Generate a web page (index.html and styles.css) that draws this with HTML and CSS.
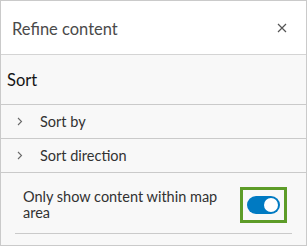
FILE: index.html
```
<!DOCTYPE html>
<html>
<head>
<meta charset="utf-8">
<link rel="stylesheet" href="styles.css">
</head>
<body>
<div class="panel">
  <div class="header">
    <span class="title">Refine content</span>
    <span class="close"><svg width="10" height="10" viewBox="0 0 10 10"><path d="M1 1L9 9M9 1L1 9" stroke="#555" stroke-width="1.2" fill="none"/></svg></span>
  </div>
  <div class="heading">Sort</div>
  <div class="row"><span class="chev"><svg width="6" height="9" viewBox="0 0 6 9"><path d="M1 1l3.5 3.5L1 8" stroke="#6a6a6a" stroke-width="1.1" fill="none"/></svg></span><span class="label">Sort by</span></div>
  <div class="row"><span class="chev"><svg width="6" height="9" viewBox="0 0 6 9"><path d="M1 1l3.5 3.5L1 8" stroke="#6a6a6a" stroke-width="1.1" fill="none"/></svg></span><span class="label">Sort direction</span></div>
  <div class="option">
    <div class="option-inner">
      <span class="opt-text">Only show content within map area</span>
      <span class="highlight"><span class="switch"><span class="knob"></span></span></span>
    </div>
  </div>
</div>
</body>
</html>
```
FILE: styles.css
```
html, body { margin: 0; padding: 0; background: #fff; }
body { font-family: "Avenir Next", Lato, "Open Sans", sans-serif; }
.panel {
  width: 307px; height: 246px; box-sizing: border-box;
  border: 1px solid #cacaca; background: #f8f8f8;
  display: flex; flex-direction: column;
}
.header {
  height: 54px; box-sizing: border-box; background: #fff;
  border-bottom: 1px solid #d4d4d4;
  display: flex; align-items: center; justify-content: space-between;
  padding: 0 19px 0 11px;
}
.title { font-size: 16.5px; color: #4a4a4a; position: relative; top: 1px; }
.close { display: flex; }
.heading {
  height: 50px; box-sizing: border-box; border-bottom: 1px solid #cacaca;
  display: flex; align-items: center; padding-left: 6px;
  font-size: 16.5px; color: #151515;
}
.row {
  height: 34px; box-sizing: border-box; border-bottom: 1px solid #cacaca;
  display: flex; align-items: center; padding-left: 16px;
  font-size: 14.5px; color: #323232;
}
.chev { display: flex; width: 23px; }
.option { padding: 0 14px 0 14px; }
.option-inner {
  border-bottom: 1px solid #cacaca; height: 61px; box-sizing: border-box;
  display: flex; align-items: center; justify-content: space-between;
  padding: 3px 0 0 8px;
}
.opt-text { font-size: 14.5px; color: #323232; width: 212px; line-height: 16px; }
.highlight {
  border: 3px solid #5d9c28; padding: 6px 4px 6px 4px; display: flex;
  margin-right: 5px;
}
.switch {
  width: 33px; height: 18px; border-radius: 9px; background: #007ac2;
  display: flex; align-items: center; justify-content: flex-end; padding: 0 2px;
  box-sizing: border-box;
}
.knob { width: 14px; height: 14px; border-radius: 50%; background: #fff; }
```
